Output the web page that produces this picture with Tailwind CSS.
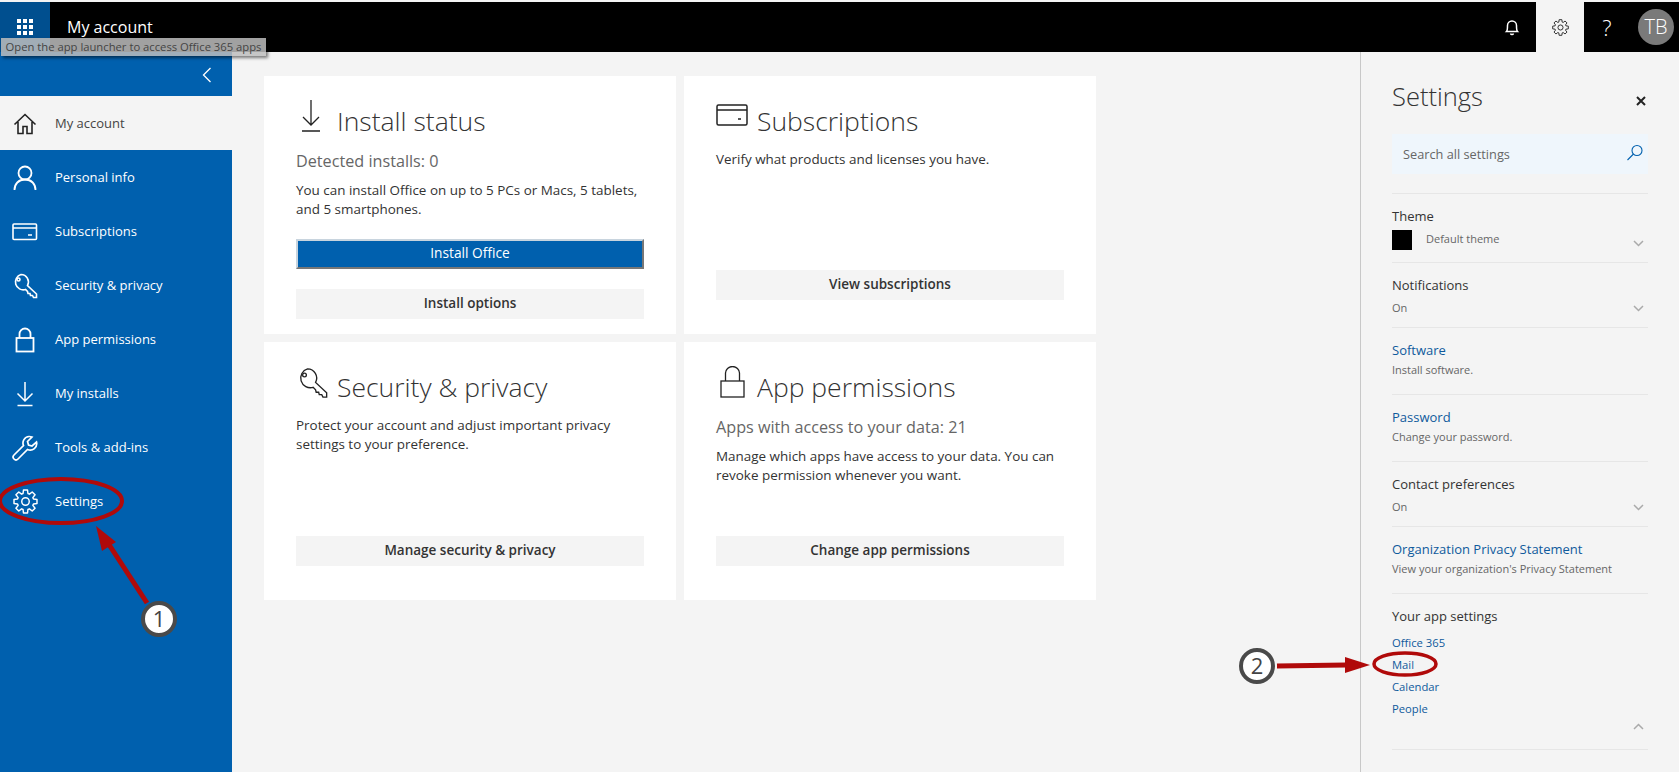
<!DOCTYPE html>
<html lang="en">
<head>
  <meta charset="UTF-8">
  <meta name="viewport" content="width=device-width, initial-scale=1.0">
  <title>My account</title>
  <script src="https://cdn.jsdelivr.net/npm/@tailwindcss/browser@4"></script>
</head>
<body class="relative h-[772px] w-[1679px] overflow-hidden bg-[#f4f4f4] font-['Open_Sans',sans-serif] text-[#333]">

  <!-- Top bar -->
  <header class="mt-[2px] flex h-[50px] items-center bg-black text-white">
    <div class="flex h-full w-[50px] items-center justify-center bg-[#004f8f]">
      <svg width="16" height="16" viewBox="0 0 16 16" fill="#fff">
        <rect x="0" y="0" width="4" height="4"/><rect x="6" y="0" width="4" height="4"/><rect x="12" y="0" width="4" height="4"/>
        <rect x="0" y="6" width="4" height="4"/><rect x="6" y="6" width="4" height="4"/><rect x="12" y="6" width="4" height="4"/>
        <rect x="0" y="12" width="4" height="4"/><rect x="6" y="12" width="4" height="4"/><rect x="12" y="12" width="4" height="4"/>
      </svg>
    </div>
    <div class="ml-[17px] text-[16px]">My account</div>
    <div class="ml-auto flex h-full items-center">
      <svg class="mr-[16px]" width="16" height="18" viewBox="0 0 16 18" fill="none" stroke="#fff" stroke-width="1.5"><path d="M2.5 13.5c1-1 1-2.500 1-6a4.500 4.500 0 0 1 9 0c0 3.500 0 5 1 6z"/><path d="M6.500 15.500a1.600 1.600 0 0 0 3 0"/></svg>
      <div class="flex h-full w-[48px] items-center justify-center bg-[#f4f4f4]">
        <svg width="17" height="17" viewBox="0 0 24 24" fill="none" stroke="#333" stroke-width="1.400" stroke-linejoin="round"><polygon points="9.66,4.35 10.06,.97 13.94,.97 14.34,4.35 15.75,4.94 18.43,2.83 21.17,5.57 19.06,8.25 19.65,9.66 23.03,10.06 23.03,13.94 19.65,14.34 19.06,15.75 21.17,18.43 18.43,21.17 15.75,19.06 14.34,19.65 13.94,23.03 10.06,23.03 9.66,19.65 8.25,19.06 5.57,21.17 2.83,18.43 4.94,15.75 4.35,14.34 .97,13.94 .97,10.06 4.35,9.66 4.94,8.25 2.83,5.57 5.57,2.83 8.25,4.94"/><circle cx="12" cy="12" r="3.600"/></svg>
      </div>
      <div class="w-[46px] text-center text-[22px] font-light">?</div>
      <div class="ml-[8px] mr-[5px] flex h-[36px] w-[36px] items-center justify-center rounded-full bg-[#7a7a7a] text-[20px] font-light">TB</div>
    </div>
  </header>

  <div class="flex h-[720px]">
    <!-- Left nav -->
    <nav class="w-[232px] shrink-0 bg-[#0060ae] text-[13px] text-white">
      <div class="flex h-[44px] items-center justify-end pr-[20px] pt-[2px]">
        <svg width="10" height="16" viewBox="0 0 10 16" fill="none" stroke="#fff" stroke-width="1.300"><path d="M8.500 1 1.500 8l7 7"/></svg>
      </div>
      <a class="flex h-[54px] items-center bg-[#f4f4f4] pt-[1px] text-[#444]">
        <span class="flex w-[55px] justify-center pr-[5px]">
          <svg width="24" height="24" viewBox="0 0 24 24" fill="none" stroke="#222" stroke-width="1.600"><path d="M1.500 12.500 12 2.500l10.500 10M5 10v11.500h5v-7h4v7h5V10"/></svg>
        </span>My account
      </a>
      <a class="flex h-[54px] items-center pt-[1px]">
        <span class="flex w-[55px] justify-center pr-[5px]">
          <svg width="26" height="26" viewBox="0 0 26 26" fill="none" stroke="#fff" stroke-width="1.800"><circle cx="13" cy="8" r="6.500"/><path d="M2.500 25c0-6 4-10.500 10.500-10.500S23.500 19 23.500 25"/></svg>
        </span>Personal info
      </a>
      <a class="flex h-[54px] items-center pt-[1px]">
        <span class="flex w-[55px] justify-center pr-[5px]">
          <svg width="26" height="18" viewBox="0 0 26 18" fill="none" stroke="#fff" stroke-width="1.600"><rect x="1" y="1" width="23.500" height="15.500" rx="1"/><path d="M1 5h23.500M16 12h4"/></svg>
        </span>Subscriptions
      </a>
      <a class="flex h-[54px] items-center pt-[1px]">
        <span class="flex w-[55px] justify-center pr-[5px]">
          <svg width="26" height="26" viewBox="0 0 26 26" fill="none" stroke="#fff" stroke-width="1.600"><path d="M9 1.500a7.500 7.500 0 0 1 6.500 11l9 8.500v3.500h-3l-1-2h-2l-.500-2h-2l-.500-2-2-2A7.500 7.500 0 1 1 9 1.500z"/><circle cx="6.500" cy="6.500" r="1.500"/></svg>
        </span>Security &amp; privacy
      </a>
      <a class="flex h-[54px] items-center pt-[1px]">
        <span class="flex w-[55px] justify-center pr-[5px]">
          <svg width="20" height="26" viewBox="0 0 20 26" fill="none" stroke="#fff" stroke-width="1.800"><rect x="1.500" y="11" width="17" height="13.500"/><path d="M4.500 11V7a5.500 5.500 0 0 1 11 0v4"/></svg>
        </span>App permissions
      </a>
      <a class="flex h-[54px] items-center pt-[1px]">
        <span class="flex w-[55px] justify-center pr-[5px]">
          <svg width="20" height="26" viewBox="0 0 20 26" fill="none" stroke="#fff" stroke-width="1.500"><path d="M10 1v19M2.500 12.500 10 20l7.500-7.500M2.500 24.500h15"/></svg>
        </span>My installs
      </a>
      <a class="flex h-[54px] items-center pt-[1px]">
        <span class="flex w-[55px] justify-center pr-[5px]">
          <svg width="26" height="26" viewBox="0 0 26 26" fill="none" stroke="#fff" stroke-width="1.700"><path d="M17 1.500a6.500 6.500 0 0 0-5.500 9L2 20a2.800 2.800 0 0 0 4 4l9.500-9.500a6.500 6.500 0 0 0 9-7.500L20 11l-3.500-1L15.500 6.500 20 2a6.500 6.500 0 0 0-3-.5z"/></svg>
        </span>Tools &amp; add-ins
      </a>
      <a class="flex h-[54px] items-center pt-[1px]">
        <span class="flex w-[55px] justify-center pr-[5px]">
          <svg width="25" height="25" viewBox="0 0 24 24" fill="none" stroke="#fff" stroke-width="1.400" stroke-linejoin="round"><polygon points="9.66,4.35 10.06,.97 13.94,.97 14.34,4.35 15.75,4.94 18.43,2.83 21.17,5.57 19.06,8.25 19.65,9.66 23.03,10.06 23.03,13.94 19.65,14.34 19.06,15.75 21.17,18.43 18.43,21.17 15.75,19.06 14.34,19.65 13.94,23.03 10.06,23.03 9.66,19.65 8.25,19.06 5.57,21.17 2.83,18.43 4.94,15.75 4.35,14.34 .97,13.94 .97,10.06 4.35,9.66 4.94,8.25 2.83,5.57 5.57,2.83 8.25,4.94"/><circle cx="12" cy="12" r="3.600"/></svg>
        </span>Settings
      </a>
    </nav>

    <!-- Cards -->
    <main class="grid h-fit grid-cols-[412px_412px] grid-rows-[258px_258px] gap-[8px] pl-[32px] pt-[24px]">
      <section class="flex flex-col bg-white px-[32px] pb-[15px] pt-[24px]">
        <div class="flex h-[42px] items-center text-[26.500px] font-light">
          <svg class="-mt-[10px] ml-[6px] mr-[17px]" width="18" height="32" viewBox="0 0 18 32" fill="none" stroke="#222" stroke-width="1.300"><path d="M9 0v25M1 17l8 8 8-8M0 31h18"/></svg>
          <h2 class="pt-[2px]">Install status</h2>
        </div>
        <p class="mt-[8px] text-[16.200px] leading-[22px] text-[#666]">Detected installs: 0</p>
        <p class="mt-[9px] text-[13.450px] leading-[19px]">You can install Office on up to 5 PCs or Macs, 5 tablets, and 5 smartphones.</p>
        <button class="mt-[20px] h-[30px] border-2 border-[#0060ae] border-r-[#777] border-b-[#777] border-l-[#c8d4de] border-t-[#c8d4de] bg-[#0060ae] pb-[1px] text-[13.750px] text-white">Install Office</button>
        <button class="mt-[20px] h-[30px] bg-[#f4f4f4] pb-[1px] text-[13.500px] font-semibold">Install options</button>
      </section>

      <section class="flex flex-col bg-white px-[32px] pb-[34px] pt-[24px]">
        <div class="flex h-[42px] items-center text-[26.500px] font-light">
          <svg class="-mt-[12px] mr-[9px]" width="32" height="22" viewBox="0 0 32 22" fill="none" stroke="#222" stroke-width="1.500"><rect x="1" y="1" width="30" height="20" rx="1.500"/><path d="M1 6h30M22 15h3"/></svg>
          <h2 class="pt-[2px]">Subscriptions</h2>
        </div>
        <p class="mt-[8px] text-[13.450px] leading-[19px]">Verify what products and licenses you have.</p>
        <button class="mt-auto h-[30px] bg-[#f4f4f4] pb-[1px] text-[13.500px] font-semibold">View subscriptions</button>
      </section>

      <section class="flex flex-col bg-white px-[32px] pb-[34px] pt-[24px]">
        <div class="flex h-[42px] items-center text-[26.500px] font-light">
          <svg class="-mt-[8px] mr-[8px]" width="33" height="32" viewBox="0 0 26 26" fill="none" stroke="#222" stroke-width="1.100"><path d="M9 1.500a7.500 7.500 0 0 1 6.500 11l9 8.500v3.500h-3l-1-2h-2l-.500-2h-2l-.500-2-2-2A7.500 7.500 0 1 1 9 1.500z"/><circle cx="6.500" cy="6.500" r="1.500"/></svg>
          <h2 class="pt-[2px]">Security &amp; privacy</h2>
        </div>
        <p class="mt-[8px] text-[13.450px] leading-[19px]">Protect your account and adjust important privacy settings to your preference.</p>
        <button class="mt-auto h-[30px] bg-[#f4f4f4] pb-[1px] text-[13.500px] font-semibold">Manage security &amp; privacy</button>
      </section>

      <section class="flex flex-col bg-white px-[32px] pb-[34px] pt-[24px]">
        <div class="flex h-[42px] items-center text-[26.500px] font-light">
          <svg class="-mt-[10px] ml-[4px] mr-[12px]" width="25" height="32" viewBox="0 0 25 32" fill="none" stroke="#222" stroke-width="1.300"><rect x="1" y="15" width="23" height="16"/><path d="M5.500 15V7a7 6.500 0 0 1 14 0v8"/></svg>
          <h2 class="pt-[2px]">App permissions</h2>
        </div>
        <p class="mt-[8px] text-[16.200px] leading-[22px] text-[#666]">Apps with access to your data: 21</p>
        <p class="mt-[9px] text-[13.450px] leading-[19px]">Manage which apps have access to your data. You can revoke permission whenever you want.</p>
        <button class="mt-auto h-[30px] bg-[#f4f4f4] pb-[1px] text-[13.500px] font-semibold">Change app permissions</button>
      </section>
    </main>

    <!-- Settings panel -->
    <aside class="ml-auto w-[319px] border-l border-[#c8c8c8] pl-[31px] pr-[31px]">
      <div class="flex h-[82px] items-center justify-between pt-[6px]">
        <h2 class="text-[25.500px] font-light">Settings</h2>
        <svg class="mr-[2px] mt-[10px]" width="10" height="10" viewBox="0 0 10 10" stroke="#222" stroke-width="2"><path d="M1 1l8 8M9 1l-8 8"/></svg>
      </div>
      <div class="flex h-[40px] items-center justify-between bg-[#eff6fc] pl-[11px] pr-[4px] pt-[2px] text-[12.750px] text-[#666]">
        Search all settings
        <svg class="-mt-[4px]" width="18" height="18" viewBox="0 0 18 18" fill="none" stroke="#0060ae" stroke-width="1.100"><circle cx="11" cy="6.500" r="5"/><path d="M7.500 10 1.500 16"/></svg>
      </div>

      <div class="mt-[19px] h-[69px] border-t border-[#e6e6e6] pt-[13px]">
        <div class="text-[13px] leading-[18px]">Theme</div>
        <div class="mt-[5px] flex items-start">
          <div class="h-[20px] w-[20px] bg-black"></div>
          <div class="ml-[14px] text-[11px] leading-[18px] text-[#666]">Default theme</div>
          <svg class="ml-auto mr-[4px] mt-[10px]" width="11" height="7" viewBox="0 0 11 7" fill="none" stroke="#aaa" stroke-width="1.500"><path d="M1 1l4.500 4.500L10 1"/></svg>
        </div>
      </div>
      <div class="h-[65px] border-t border-[#e6e6e6] pt-[13px]">
        <div class="text-[13px] leading-[18px]">Notifications</div>
        <div class="mt-[5px] flex items-center justify-between text-[11px] leading-[18px] text-[#666]">On
          <svg class="mr-[4px]" width="11" height="7" viewBox="0 0 11 7" fill="none" stroke="#aaa" stroke-width="1.500"><path d="M1 1l4.500 4.500L10 1"/></svg>
        </div>
      </div>
      <div class="h-[67px] border-t border-[#e6e6e6] pt-[13px]">
        <div class="text-[13px] leading-[18px] text-[#0f5a9c]">Software</div>
        <div class="mt-[2px] text-[11px] leading-[18px] text-[#666]">Install software.</div>
      </div>
      <div class="h-[67px] border-t border-[#e6e6e6] pt-[13px]">
        <div class="text-[13px] leading-[18px] text-[#0f5a9c]">Password</div>
        <div class="mt-[2px] text-[11px] leading-[18px] text-[#666]">Change your password.</div>
      </div>
      <div class="h-[65px] border-t border-[#e6e6e6] pt-[13px]">
        <div class="text-[13px] leading-[18px]">Contact preferences</div>
        <div class="mt-[5px] flex items-center justify-between text-[11px] leading-[18px] text-[#666]">On
          <svg class="mr-[4px]" width="11" height="7" viewBox="0 0 11 7" fill="none" stroke="#aaa" stroke-width="1.500"><path d="M1 1l4.500 4.500L10 1"/></svg>
        </div>
      </div>
      <div class="h-[67px] border-t border-[#e6e6e6] pt-[13px]">
        <div class="text-[13px] leading-[18px] text-[#0f5a9c]">Organization Privacy Statement</div>
        <div class="mt-[2px] text-[11px] leading-[18px] text-[#666]">View your organization's Privacy Statement</div>
      </div>
      <div class="h-[157px] border-y border-[#e6e6e6] pt-[13px]">
        <div class="text-[13px] leading-[18px]">Your app settings</div>
        <div class="mt-[9px] flex flex-col gap-[4px] text-[11.250px] leading-[18px] text-[#0f5a9c]">
          <a>Office 365</a>
          <a>Mail</a>
          <a>Calendar</a>
          <a>People</a>
        </div>
        <div class="mt-[5px] flex justify-end pr-[4px]">
          <svg width="11" height="7" viewBox="0 0 11 7" fill="none" stroke="#aaa" stroke-width="1.500"><path d="M1 6l4.500-4.500L10 6"/></svg>
        </div>
      </div>
    </aside>
  </div>

  <!-- Browser tooltip over the launcher -->
  <div class="absolute left-[1px] top-[38px] flex h-[18px] w-[265px] items-center justify-center bg-[#bdbdbd]/85 text-[11.250px] text-[#444] shadow-[2px_2px_3px_rgba(0,0,0,0.5)]">Open the app launcher to access Office 365 apps</div>

  <!-- Numbered callouts drawn on top of the screenshot -->
  <svg class="pointer-events-none absolute left-0 top-0" width="1679" height="772" viewBox="0 0 1679 772" fill="none">
    <ellipse cx="61" cy="501" rx="61" ry="22" stroke="#b00a0a" stroke-width="4"/>
    <path d="M147 603 108 543" stroke="#b00a0a" stroke-width="5"/>
    <path d="M96 526 116 542 102 551z" fill="#b00a0a"/>
    <circle cx="159" cy="619" r="16" fill="#fff" stroke="#4a4a4a" stroke-width="4"/>
    <text x="159" y="627" text-anchor="middle" font-size="22" fill="#444" font-family="Open Sans">1</text>
    <ellipse cx="1405" cy="664" rx="31" ry="11" stroke="#b00a0a" stroke-width="3.500"/>
    <path d="M1277 666 1346 665" stroke="#b00a0a" stroke-width="5"/>
    <path d="M1345 657 1370 665 1345 673z" fill="#b00a0a"/>
    <circle cx="1257" cy="666" r="16" fill="#fff" stroke="#4a4a4a" stroke-width="4"/>
    <text x="1257" y="674" text-anchor="middle" font-size="22" fill="#444" font-family="Open Sans">2</text>
  </svg>
</body>
</html>
